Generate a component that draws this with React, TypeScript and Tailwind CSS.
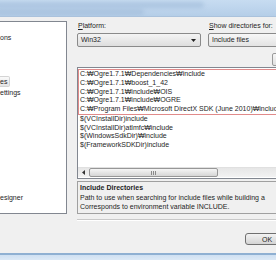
import React from "react";

const lines1 = [
  "C:₩Ogre1.7.1₩Dependencies₩include",
  "C:₩Ogre1.7.1₩boost_1_42",
  "C:₩Ogre1.7.1₩include₩OIS",
  "C:₩Ogre1.7.1₩include₩OGRE",
  "C:₩Program Files₩Microsoft DirectX SDK (June 2010)₩include",
];
const lines2 = [
  "$(VCInstallDir)include",
  "$(VCInstallDir)atlmfc₩include",
  "$(WindowsSdkDir)₩include",
  "$(FrameworkSDKDir)include",
];

function Arrow() {
  return (
    <svg width="5" height="3" viewBox="0 0 5 3">
      <path d="M0 0 H5 L2.5 3 Z" fill="#222" />
    </svg>
  );
}

export default function App() {
  return (
    <div className="w-[276px] h-[260px] overflow-hidden flex flex-col bg-[#f0f0f0] font-['Liberation_Sans','DejaVu_Sans',sans-serif] text-[7px] text-[#1e1e1e]">
      {/* title bar */}
      <div className="h-[17px] shrink-0 relative overflow-hidden bg-gradient-to-b from-[#c7dcf1] to-[#b5cee8] border-b border-[#aac2dc]">
        <div className="absolute left-[-6px] top-[2px] w-[210px] h-[6px] rounded-full bg-[#9fbad8] blur-[2px] opacity-60" />
        <div className="absolute left-[-6px] top-[9px] w-[150px] h-[6px] rounded-full bg-[#9fbad8] blur-[2px] opacity-60" />
      </div>

      {/* body */}
      <div className="flex-1 flex flex-col">
        <div className="flex items-start pt-[4px]">
          {/* left tree */}
          <div className="w-[67px] h-[193px] shrink-0 bg-white border-y border-r border-[#828790] flex flex-col items-start">
            <div className="mt-[10px] h-[11px] leading-[11px]">ons</div>
            <div className="mt-[33px] h-[11px] leading-[9px] pr-[2px] bg-gradient-to-b from-[#fafafa] to-[#e4e4e4] border border-l-0 border-[#d4d4d4] rounded-r-[2px]">
              es
            </div>
            <div className="h-[11px] leading-[11px]">ettings</div>
            <div className="mt-[94px] h-[11px] leading-[11px]">esigner</div>
          </div>

          {/* right side */}
          <div className="ml-[10px] w-[240px] shrink-0 flex flex-col">
            <div className="flex h-[10px] leading-[10px]">
              <div className="w-[131px] pl-[1px]">
                <span className="underline">P</span>latform:
              </div>
              <div className="pl-[1px]">
                <span className="underline">S</span>how directories for:
              </div>
            </div>
            <div className="flex gap-[7px] mt-[2px] h-[14px]">
              <div className="w-[124px] h-[14px] rounded-[2px] border border-[#8a8a8a] bg-gradient-to-b from-[#f4f4f4] to-[#dedede] flex items-center pl-[3px] pr-[4px] justify-between">
                <span>Win32</span>
                <Arrow />
              </div>
              <div className="w-[100px] h-[14px] rounded-[2px] border border-[#8a8a8a] bg-gradient-to-b from-[#f7f7f7] to-[#e3e3e3] flex items-center pl-[3px]">
                <span>Include files</span>
              </div>
            </div>
            {/* toolbar */}
            <div className="mt-[6px] h-[13px] flex">
              <div className="ml-[195px] w-[16px] h-[13px] rounded-[2px] border border-[#9a9a9a] bg-gradient-to-b from-[#f6f6f6] to-[#e0e0e0]" />
            </div>
            {/* list */}
            <div className="mt-[1px] h-[112px] bg-white border border-[#828790] flex flex-col">
              <div className="mt-[1px] border border-[#e08a8a] pl-[1px] whitespace-nowrap">
                {lines1.map((l) => (
                  <div key={l} className="h-[8.75px] leading-[8.75px]">
                    {l}
                  </div>
                ))}
              </div>
              <div className="pl-[2px] whitespace-nowrap">
                {lines2.map((l) => (
                  <div key={l} className="h-[8.75px] leading-[8.75px]">
                    {l}
                  </div>
                ))}
              </div>
              <div className="mt-auto mb-[1px] h-[10px] flex bg-gradient-to-b from-[#e6e6e6] to-[#f2f2f2] border-t border-[#e0e0e0]">
                <div className="w-[10px] h-full flex items-center justify-center">
                  <svg width="3" height="5" viewBox="0 0 3 5">
                    <path d="M3 0 V5 L0 2.5 Z" fill="#333" />
                  </svg>
                </div>
                <div className="ml-[1px] w-[129px] h-full rounded-[2px] border border-[#979797] bg-gradient-to-b from-[#f5f5f5] to-[#d6d6d6] flex items-center justify-center gap-[1px]">
                  <div className="w-px h-[4px] bg-[#8a8a8a]" />
                  <div className="w-px h-[4px] bg-[#8a8a8a]" />
                  <div className="w-px h-[4px] bg-[#8a8a8a]" />
                </div>
                <div className="flex-1" />
              </div>
            </div>
            {/* description */}
            <div className="mt-[2px] h-[33px] border border-[#a0a0a0] pl-[2px] pt-[1px] whitespace-nowrap leading-[9.5px]">
              <div className="font-bold">Include Directories</div>
              <div>Path to use when searching for include files while building a</div>
              <div>Corresponds to environment variable INCLUDE.</div>
            </div>
          </div>
        </div>

        {/* separator */}
        <div className="mt-[5px] ml-[77px] h-[2px] border-t border-[#c9c9c9] border-b border-b-white" />

        {/* buttons */}
        <div className="mt-[12px] ml-[245px] w-[44px] h-[12px] rounded-[3px] border border-[#707070] bg-gradient-to-b from-[#f3f3f3] to-[#d4d4d4] flex items-center justify-center leading-none">
          OK
        </div>
      </div>

      {/* bottom frame */}
      <div className="h-[7px] shrink-0 border-t-2 border-[#8fb0d2] bg-gradient-to-b from-[#cfe0f2] to-[#dce9f6]" />
    </div>
  );
}
